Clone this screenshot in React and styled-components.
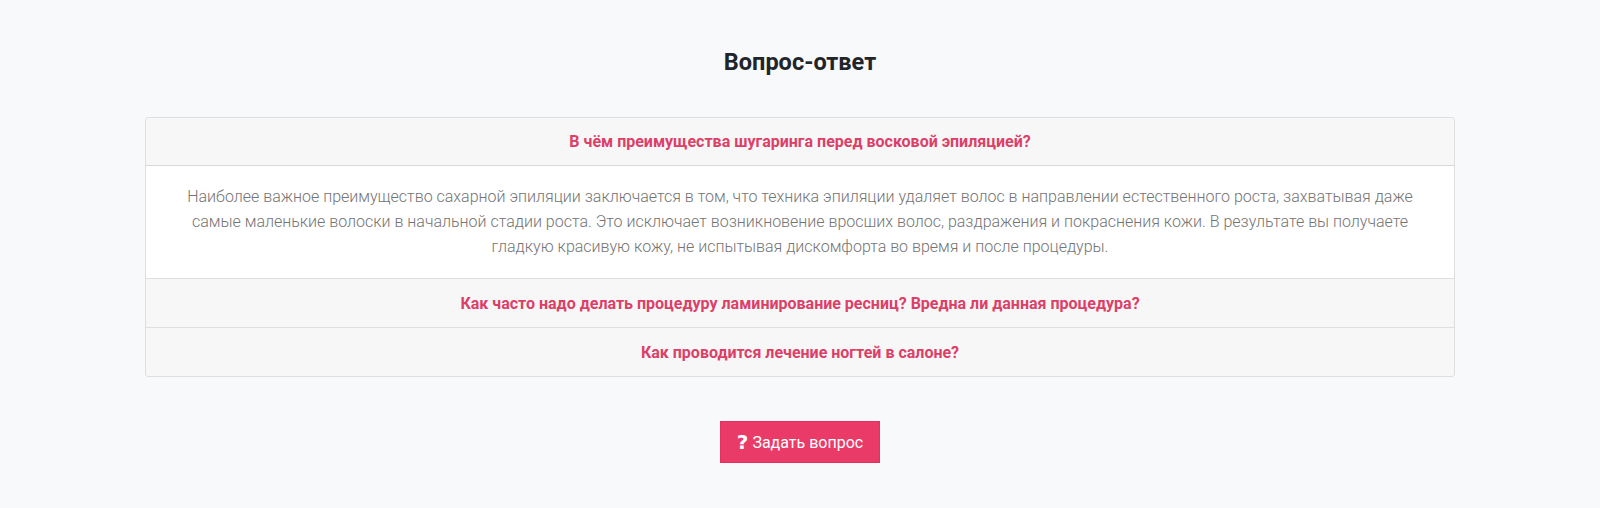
import React, { useState } from "react";
import styled, { createGlobalStyle } from "styled-components";

const GlobalStyle = createGlobalStyle`
  html, body {
    margin: 0;
    padding: 0;
    background: #f8f9fa;
    font-family: Roboto, "Liberation Sans", sans-serif;
  }
  * { box-sizing: border-box; }
`;

const Section = styled.section`
  padding: 45px 0 46px;
`;

const Container = styled.div`
  width: 1310px;
  margin: 0 auto;
  display: flex;
  flex-direction: column;
  align-items: center;
`;

const Title = styled.h2`
  margin: 0 0 38px;
  font-size: 23.5px;
  line-height: 34px;
  font-weight: 700;
  color: #212529;
`;

const Accordion = styled.div`
  width: 100%;
  border: 1px solid rgba(0, 0, 0, 0.125);
  border-radius: 4px;
  background: #fff;
  overflow: hidden;
`;

const Item = styled.div`
  & + & {
    border-top: 1px solid rgba(0, 0, 0, 0.125);
  }
`;

const Header = styled.button`
  display: block;
  width: 100%;
  height: 48px;
  border: 0;
  background: #f7f7f7;
  color: #dc3f68;
  font-family: Roboto, "Liberation Sans", sans-serif;
  font-size: 16px;
  font-weight: 700;
  text-align: center;
  cursor: pointer;
  border-bottom: ${(p) => (p.$open ? "1px solid rgba(0,0,0,0.125)" : "0")};
`;

const Body = styled.div`
  padding: 18px 20px 19px;
  text-align: center;
  font-size: 16px;
  font-weight: 300;
  line-height: 25px;
  color: #747474;
`;

const AskButton = styled.button`
  margin-top: 44px;
  display: inline-flex;
  align-items: center;
  gap: 4px;
  width: 160px;
  height: 42px;
  justify-content: center;
  border: 1px solid #e6305f;
  background: #ea3a68;
  color: #fff;
  font-family: Roboto, "Liberation Sans", sans-serif;
  font-size: 16px;
  font-weight: 400;
  cursor: pointer;
`;

const QIcon = styled.span`
  font-size: 20px;
  font-weight: 900;
  line-height: 1;
  font-family: "DejaVu Sans", sans-serif;
`;

const faq = [
  {
    q: "В чём преимущества шугаринга перед восковой эпиляцией?",
    a: "Наиболее важное преимущество сахарной эпиляции заключается в том, что техника эпиляции удаляет волос в направлении естественного роста, захватывая даже самые маленькие волоски в начальной стадии роста. Это исключает возникновение вросших волос, раздражения и покраснения кожи. В результате вы получаете гладкую красивую кожу, не испытывая дискомфорта во время и после процедуры.",
  },
  {
    q: "Как часто надо делать процедуру ламинирование ресниц? Вредна ли данная процедура?",
    a: "Процедуру рекомендуется повторять раз в 6–8 недель. Составы безопасны для ресниц.",
  },
  {
    q: "Как проводится лечение ногтей в салоне?",
    a: "Мастер оценивает состояние ногтей и подбирает уход индивидуально.",
  },
];

export default function App() {
  const [open, setOpen] = useState(0);

  return (
    <>
      <GlobalStyle />
      <Section>
        <Container>
          <Title>Вопрос-ответ</Title>
          <Accordion>
            {faq.map((item, i) => (
              <Item key={i}>
                <Header $open={open === i} onClick={() => setOpen(open === i ? -1 : i)}>
                  {item.q}
                </Header>
                {open === i && <Body>{item.a}</Body>}
              </Item>
            ))}
          </Accordion>
          <AskButton>
            <QIcon>?</QIcon>Задать вопрос
          </AskButton>
        </Container>
      </Section>
    </>
  );
}
